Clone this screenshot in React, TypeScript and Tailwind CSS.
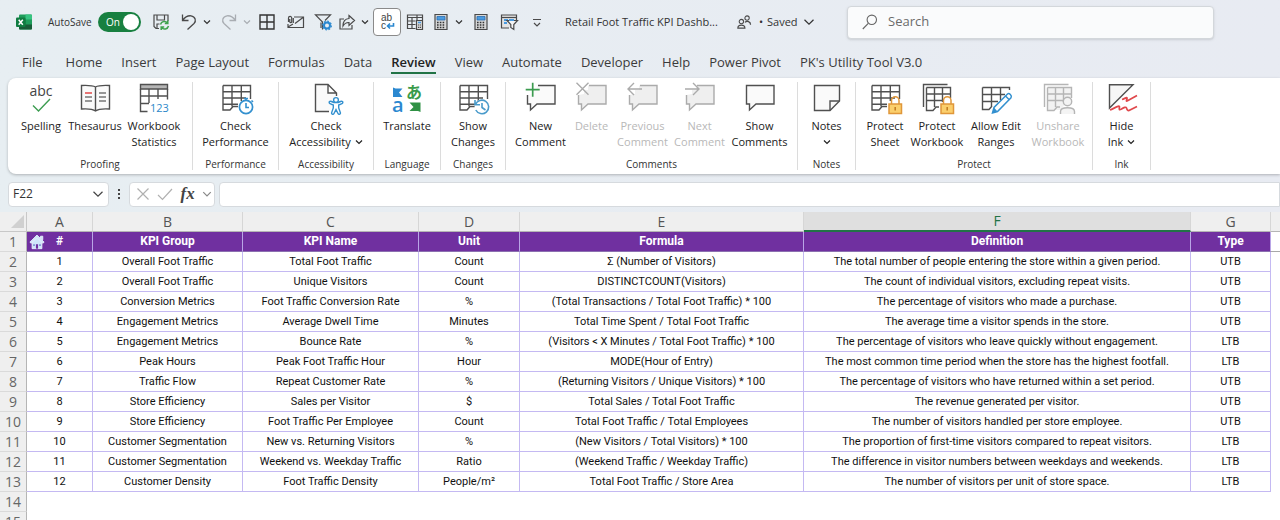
import type { ReactNode } from 'react';

const columns = [
  { letter: 'A', title: '#' },
  { letter: 'B', title: 'KPI Group' },
  { letter: 'C', title: 'KPI Name' },
  { letter: 'D', title: 'Unit' },
  { letter: 'E', title: 'Formula' },
  { letter: 'F', title: 'Definition' },
  { letter: 'G', title: 'Type' },
];

const kpis = [
  ['1', 'Overall Foot Traffic', 'Total Foot Traffic', 'Count', 'Σ (Number of Visitors)', 'The total number of people entering the store within a given period.', 'UTB'],
  ['2', 'Overall Foot Traffic', 'Unique Visitors', 'Count', 'DISTINCTCOUNT(Visitors)', 'The count of individual visitors, excluding repeat visits.', 'UTB'],
  ['3', 'Conversion Metrics', 'Foot Traffic Conversion Rate', '%', '(Total Transactions / Total Foot Traffic) * 100', 'The percentage of visitors who made a purchase.', 'UTB'],
  ['4', 'Engagement Metrics', 'Average Dwell Time', 'Minutes', 'Total Time Spent / Total Foot Traffic', 'The average time a visitor spends in the store.', 'UTB'],
  ['5', 'Engagement Metrics', 'Bounce Rate', '%', '(Visitors < X Minutes / Total Foot Traffic) * 100', 'The percentage of visitors who leave quickly without engagement.', 'LTB'],
  ['6', 'Peak Hours', 'Peak Foot Traffic Hour', 'Hour', 'MODE(Hour of Entry)', 'The most common time period when the store has the highest footfall.', 'LTB'],
  ['7', 'Traffic Flow', 'Repeat Customer Rate', '%', '(Returning Visitors / Unique Visitors) * 100', 'The percentage of visitors who have returned within a set period.', 'UTB'],
  ['8', 'Store Efficiency', 'Sales per Visitor', '$', 'Total Sales / Total Foot Traffic', 'The revenue generated per visitor.', 'UTB'],
  ['9', 'Store Efficiency', 'Foot Traffic Per Employee', 'Count', 'Total Foot Traffic / Total Employees', 'The number of visitors handled per store employee.', 'UTB'],
  ['10', 'Customer Segmentation', 'New vs. Returning Visitors', '%', '(New Visitors / Total Visitors) * 100', 'The proportion of first-time visitors compared to repeat visitors.', 'LTB'],
  ['11', 'Customer Segmentation', 'Weekend vs. Weekday Traffic', 'Ratio', '(Weekend Traffic / Weekday Traffic)', 'The difference in visitor numbers between weekdays and weekends.', 'LTB'],
  ['12', 'Customer Density', 'Foot Traffic Density', 'People/m²', 'Total Foot Traffic / Store Area', 'The number of visitors per unit of store space.', 'LTB'],
];

const tabs = ['Home', 'Insert', 'Page Layout', 'Formulas', 'Data', 'Review', 'View', 'Automate', 'Developer', 'Help', 'Power Pivot', "PK's Utility Tool V3.0"];

/* ---------- small shared icons ---------- */

const Chevron = ({ className = 'w-2 h-2' }: { className?: string }) => (
  <svg viewBox="0 0 8 8" className={className} fill="none" stroke="currentColor" strokeWidth="1.2">
    <path d="M1 2.5 4 5.5 7 2.5" vectorEffect="non-scaling-stroke" />
  </svg>
);

const Small = ({ children, className = 'w-4 h-4' }: { children: ReactNode; className?: string }) => (
  <svg viewBox="0 0 16 16" className={`overflow-visible ${className}`} fill="none" stroke="#4a4a4a" strokeWidth="1.2">
    {children}
  </svg>
);

const Big = ({ children }: { children: ReactNode }) => (
  <svg viewBox="0 0 32 32" className="w-8 h-8 overflow-visible" fill="none" stroke="#505050" strokeWidth="1.4">
    {children}
  </svg>
);

/* ---------- ribbon icons ---------- */

const sheetPath = 'M3 3.5H30.5V17M3 3.5V28H10L13 24.5H18M3 9.8H30.5M3 16H26M3 22.3H18M12 3.5V24.5M21.3 3.5V19';

const SpellingIcon = () => (
  <Big>
    <text x="16" y="14" textAnchor="middle" fontSize="14" fill="#444" stroke="none" fontFamily="Open Sans, sans-serif">abc</text>
    <path d="M8 23.5 13.5 29 25 17" stroke="#3c9c50" />
  </Big>
);

const ThesaurusIcon = () => (
  <Big>
    <path d="M16.5 5C13 3 7 3.3 2.5 3.5V27C7 26.7 13 26.5 16.5 29C20 26.5 26 26.7 30.5 27V3.5C26 3.3 20 3 16.5 5ZM16.5 5V29" fill="#fafafa" />
    <path d="M6 15H13M6 19H13M20 11H27M20 15H27M20 19H27" stroke="#777" />
    <path d="M6 11H13" stroke="#e03a3a" />
  </Big>
);

const StatisticsIcon = () => (
  <Big>
    <path d="M2.5 2.5H29.5V7H2.5Z" fill="#b5b5b5" />
    <path d="M2.5 7V29.5H9.5M29.5 7V17.5M2.5 14H29.5M2.5 21.5H11M11 7V21M20 7V17" />
    <text x="12" y="30" fontSize="11" fill="#2b88c9" stroke="none" fontFamily="Open Sans, sans-serif">123</text>
  </Big>
);

const PerformanceIcon = () => (
  <Big>
    <path d={sheetPath} />
    <circle cx="26" cy="25" r="6.6" fill="#fff" stroke="#3390cf" strokeWidth="1.7" />
    <path d="M26 21V25.5H29M24 16.5H28M26 16.5V18M31.5 18.5 33 20" stroke="#3390cf" strokeWidth="1.6" />
  </Big>
);

const AccessibilityIcon = () => (
  <Big>
    <path d="M19 29.5H5.5V2.5H18L26.5 11V14M18 2.5V11H26.5" fill="#fafafa" />
    <circle cx="26" cy="18" r="2.4" stroke="#3390cf" fill="#fff" />
    <path d="M19.5 19.5C18.8 20.5 19.3 21.3 20 21.6L23.3 23V26L21.5 31C21.5 32.5 23.4 32.8 24 31.5L26 27.5 28 31.5C28.6 32.8 30.5 32.5 30.5 31L28.7 26V23L32 21.6C32.7 21.3 33.2 20.5 32.5 19.5C31.8 19 31.2 19.2 30.5 19.5C27.5 21 24.5 21 21.5 19.5C20.8 19.2 20 19 19.5 19.5Z" stroke="#3390cf" fill="#fff" />
  </Big>
);

const TranslateIcon = () => (
  <Big>
    <path d="M2 5.5 4.5 6.5H11.5L8 10.5 11.5 15H2Z" fill="#2b88d0" stroke="none" />
    <text x="1" y="29.5" fontSize="20" fontWeight="600" fill="#2b88d0" stroke="none" fontFamily="Open Sans, sans-serif">a</text>
    <text x="15" y="15.5" fontSize="16" fontWeight="700" fill="#3a9b4b" stroke="none" fontFamily="Noto Sans CJK JP, sans-serif">あ</text>
    <path d="M18.5 20.5H29.5V30L27 29H18.5L22.5 25Z" fill="#2f9144" stroke="none" />
  </Big>
);

const ChangesIcon = () => (
  <Big>
    <path d={sheetPath} />
    <circle cx="25" cy="25" r="7.5" fill="#fff" stroke="none" />
    <path d="M18.5 22.5A6.8 6.8 0 1 1 18.8 28M18 18V22.8H23M25 21V25.5L28.5 28" stroke="#4a9bcb" strokeWidth="1.6" />
  </Big>
);

const BubbleIcon = ({ mark }: { mark?: 'plus' | 'x' | 'left' | 'right' }) => {
  const off = mark && mark !== 'plus';
  return (
    <Big>
      {mark ? (
        <path d="M12 3.5H30V22H12L5.5 28V22H2.5V13L8 12V8H12Z" fill={off ? '#efefef' : '#fafafa'} stroke="none" />
      ) : null}
      <path
        d={mark ? 'M13 3.5H30V22H12L5.5 28V22H2.5V13' : 'M2.5 3.5H30V22H12L5.5 28V22H2.5Z'}
        fill={mark ? 'none' : '#fafafa'}
        stroke={off ? '#ababab' : '#505050'}
      />
      {mark === 'plus' && <path d="M7.7 0.7V14.7M0.7 7.7H14.7" stroke="#3c9c50" strokeWidth="1.7" />}
      {mark === 'x' && <path d="M0.5 0.7 12.5 12.7M12.5 0.7 0.5 12.7" stroke="#ababab" />}
      {mark === 'left' && <path d="M15 7H1M7 1 1 7 7 13" stroke="#ababab" />}
      {mark === 'right' && <path d="M1 7H15M9 1 15 7 9 13" stroke="#ababab" />}
    </Big>
  );
};

const NotesIcon = () => (
  <Big>
    <path d="M3.5 3.5H28.5V19L19 28.5H3.5Z" fill="#fafafa" />
    <path d="M28.5 19H19V28.5" />
  </Big>
);

const Lock = () => (
  <g stroke="#e0973a" strokeWidth="1.5">
    <path d="M22.5 22V18.5A3.7 3.7 0 0 1 30 18.5V22" fill="none" />
    <path d="M20 22H32.5V31.5H20Z" fill="#fbcf6c" />
    <path d="M26.2 25V28.5" stroke="#c07a20" />
  </g>
);

const ProtectSheetIcon = () => (
  <Big>
    <path d={sheetPath} />
    <path d="M18 20H34V33H18Z" fill="#fff" stroke="none" />
    <Lock />
  </Big>
);

const bookPath = 'M2.5 25V2.5H26.5M5.5 5.5H29.5V16M5.5 5.5V28.5H12L15 25H18M5.5 12H29.5M5.5 18.5H22M13.5 5.5V25M21.5 5.5V20';

const ProtectBookIcon = () => (
  <Big>
    <path d={bookPath} />
    <Lock />
  </Big>
);

const RangesIcon = () => (
  <Big>
    <path d="M2.5 5.5H29.5V8M2.5 5.5V27.5H9L12 24M2.5 12.5H25M2.5 19.5H18M11.5 5.5V24M20.5 5.5V18" />
    <path d="M12.5 31 14 25.5 27.5 12C29 10.7 32.5 13.5 31 15.8L17.5 29.5Z" fill="#fff" stroke="#3390cf" strokeWidth="1.5" />
    <path d="M25.5 14 29 17.5" stroke="#3390cf" />
    <path d="M12.5 31 14 25.5 17.5 29.5Z" fill="#3390cf" stroke="none" />
  </Big>
);

const UnshareIcon = () => (
  <Big>
    <g stroke="#b5b5b5">
      <path d="M5.5 5.5H29.5V16L18 28H5.5Z" fill="#f2f2f2" stroke="none" />
      <path d={bookPath} />
      <circle cx="25.5" cy="19.5" r="4.2" fill="#f4f4f4" />
      <path d="M18.5 32V29.5C18.5 24.5 32.5 24.5 32.5 29.5V32" fill="#f4f4f4" />
    </g>
  </Big>
);

const InkIcon = () => (
  <Big>
    <path d="M3.5 2.7H27L3.5 26Z" fill="#f6f6f6" />
    <path d="M16 17.5C19 16.5 21.5 14.5 21 16.5S19.5 20 22 18.5L31 13.5M4 28C8 26.5 14 22.5 13.5 25S13 28.5 15.5 27 20 24.5 20.5 26 21.5 29.5 24 28L31 24.5" stroke="#e0484c" strokeWidth="1.7" />
  </Big>
);

/* ---------- quick access icons ---------- */

const ExcelLogo = () => (
  <svg viewBox="0 0 16 16" className="w-4 h-4 shrink-0">
    <rect x="3" y="0.5" width="13" height="15" rx="1" fill="#1f9d5b" />
    <path d="M9.5 0.5H15A1 1 0 0 1 16 1.5V5.5H9.5Z" fill="#37c481" />
    <path d="M3 5.5H9.5V10.5H3Z" fill="#14713f" />
    <path d="M3 10.5H16V14.5A1 1 0 0 1 15 15.5H4A1 1 0 0 1 3 14.5Z" fill="#185c37" />
    <rect x="0" y="3.5" width="9.5" height="9.5" rx="1" fill="#107c41" />
    <path d="M2.7 5.7 6.8 10.8M6.8 5.7 2.7 10.8" stroke="#fff" strokeWidth="1.5" />
  </svg>
);

const Calculator = () => (
  <Small>
    <path d="M2 0.5H14V15.5H2Z" fill="#d8d8d8" />
    <path d="M4 2.5H12V6H4Z" fill="#4a9be0" stroke="#2a6db0" strokeWidth="0.8" />
    <path d="M4 8.5H12M4 11H12M4 13.5H12" strokeDasharray="1.6 1.2" strokeWidth="1.5" stroke="#333" />
  </Small>
);

const QuickButton = ({ label, className, children }: { label: string; className: string; children: ReactNode }) => (
  <button type="button" aria-label={label} className={`shrink-0 flex items-center justify-center ${className}`}>
    {children}
  </button>
);

const TitleBar = () => (
  <div className="flex items-center h-11 pl-4 text-[#333]">
    <ExcelLogo />
    <label htmlFor="autosave" className="ml-4 w-[50px] shrink-0 text-[10px] whitespace-nowrap">AutoSave</label>
    <div className="relative w-[43px] h-5 shrink-0">
      <input id="autosave" type="checkbox" defaultChecked className="appearance-none block w-full h-full rounded-full bg-[#188040]" />
      <span className="absolute left-2 top-0.5 text-[10px] leading-4 text-white pointer-events-none">On</span>
      <span className="absolute right-0.5 top-0.5 w-4 h-4 rounded-full bg-white pointer-events-none" />
    </div>
    <QuickButton label="Save" className="ml-3 w-4 h-4">
      <Small>
        <path d="M6 14.5H3L1 12.5V1H15V7M4 1V6H11.5V1M4 14V10H6.5" />
        <path d="M7.5 10.5A4 4 0 0 1 14.5 9M14.8 6.5V9.5H11.8M15.5 12A4 4 0 0 1 8.5 13.5M8.2 16V13H11.2" stroke="#3fa34d" strokeWidth="1.5" />
      </Small>
    </QuickButton>
    <QuickButton label="Undo" className="ml-3 w-4 h-4">
      <Small>
        <path d="M1.5 0.5V6.5H7.5M1.5 6.5C4 3 7 1.5 10 1.8C14.5 2.5 15.5 7 13 9.5L6.5 15.5" strokeWidth="1.3" />
      </Small>
    </QuickButton>
    <QuickButton label="Undo history" className="ml-1.5 w-2 h-4"><Chevron /></QuickButton>
    <QuickButton label="Redo" className="ml-2.5 w-4 h-4">
      <Small>
        <path d="M14.5 0.5V6.5H8.5M14.5 6.5C12 3 9 1.5 6 1.8C1.5 2.5 0.5 7 3 9.5L9.5 15.5" stroke="#a9adb2" strokeWidth="1.3" />
      </Small>
    </QuickButton>
    <QuickButton label="Redo history" className="ml-1.5 w-2 h-4 text-[#a9adb2]"><Chevron /></QuickButton>
    <QuickButton label="Borders" className="ml-2 w-4 h-4">
      <Small><path d="M1 1H15V15H1ZM8 1V15M1 8H15" stroke="#333" strokeWidth="1.4" /></Small>
    </QuickButton>
    <QuickButton label="Email" className="ml-3 w-4 h-4">
      <Small>
        <path d="M7 3H16.5V13.5H1V10M8 9.5 16 3.5M1 13 6 10" />
        <path d="M1.5 8V4A1.6 1.6 0 0 1 4.7 4V8A1 1 0 0 1 2.8 8V5M6.3 4V9" />
      </Small>
    </QuickButton>
    <QuickButton label="Filter" className="ml-3 w-4 h-4">
      <Small>
        <path d="M7.5 15.5V8L0.5 0.8H15.5L10 6.5" />
        <path d="M6 8.5V14" />
        <circle cx="12" cy="11.5" r="3" stroke="#2b88d0" strokeWidth="2" />
        <circle cx="12" cy="11.5" r="4.4" stroke="#2b88d0" strokeWidth="1.2" strokeDasharray="1.8 1.6" />
      </Small>
    </QuickButton>
    <QuickButton label="Share" className="ml-2 w-4 h-4">
      <Small>
        <path d="M5 5H1V15H13V11M10 1.5 15.5 6.5 10 11.5V8.5C7 8.3 5.5 9.5 4 12C4 8 6 4.8 10 4.5Z" />
      </Small>
    </QuickButton>
    <QuickButton label="Share options" className="ml-1.5 w-2 h-4"><Chevron /></QuickButton>
    <QuickButton label="Wrap text" className="ml-1 w-7 h-7 rounded border border-[#8a8a8a] bg-white">
      <Small>
        <text x="2" y="6.5" fontSize="10" fill="#444" stroke="none" fontFamily="Liberation Sans, sans-serif">ab</text>
        <text x="2" y="15" fontSize="10" fill="#444" stroke="none" fontFamily="Liberation Sans, sans-serif">c</text>
        <path d="M14.5 9V12H8.5M11 9.5 8.5 12 11 14.5" stroke="#2b88d0" strokeWidth="1.6" />
      </Small>
    </QuickButton>
    <QuickButton label="Calculate sheet" className="ml-1.5 w-4 h-4">
      <Small>
        <path d="M8.5 14.5H0.5V1H15.5V6M0.5 3.5H15.5M0.5 7H8.5M0.5 10.5H8.5M5 3.5V14.5M10 1V6" />
        <path d="M9.5 6.5H15.5V15.5H9.5Z" fill="#ddd" />
        <path d="M11 8.5H14" stroke="#4a9be0" strokeWidth="1.6" />
        <path d="M11 11H14M11 13.3H14" strokeDasharray="1.2 0.6" />
      </Small>
    </QuickButton>
    <QuickButton label="Calculate now" className="ml-2.5 w-4 h-4"><Calculator /></QuickButton>
    <QuickButton label="Calculate options" className="ml-1.5 w-2 h-4"><Chevron /></QuickButton>
    <QuickButton label="Calculator" className="ml-2.5 w-4 h-4"><Calculator /></QuickButton>
    <QuickButton label="Filter table" className="ml-3 w-4 h-4">
      <Small>
        <path d="M15.5 6V1H0.5V14H8" fill="#e4e4e4" />
        <path d="M0.5 3.5H15.5" />
        <path d="M3 6H7M3 9H6" stroke="#4a9be0" strokeWidth="2" />
        <path d="M6 6.5H16.5L12.8 10.5V15.5L9.8 13.5V10.5Z" fill="#f4f4f4" />
        <path d="M8 6H13" stroke="#4a9be0" strokeWidth="2" />
      </Small>
    </QuickButton>
    <QuickButton label="Customize toolbar" className="ml-3 w-4 h-4">
      <Small><path d="M4 5.5H12M5 9 8 12 11 9" /></Small>
    </QuickButton>
    <h1 className="ml-5 w-[160px] shrink-0 text-[11px] whitespace-nowrap">Retail Foot Traffic KPI Dashb...</h1>
    <QuickButton label="Shared with" className="ml-3 w-3.5 h-4">
      <Small className="w-3.5 h-3.5">
        <circle cx="11.5" cy="3.5" r="2.5" />
        <circle cx="5" cy="7.5" r="2.5" />
        <path d="M1 15C1 10.5 9 10.5 9 15ZM9 8.5C11.5 6 15.5 7.5 15.5 11" strokeWidth="1.4" />
      </Small>
    </QuickButton>
    <span className="ml-2 w-2 text-[11px]">•</span>
    <button type="button" className="flex items-center justify-between w-12 shrink-0 text-[11px]">
      Saved
      <Chevron className="w-3 h-3 shrink-0" />
    </button>
    <div className="ml-8 mr-[66px] flex-1 flex items-center h-[33px] pl-3.5 rounded bg-[#fafbfc] border border-[#d3d7db] shadow-sm">
      <svg viewBox="0 0 16 16" className="w-4 h-4 shrink-0" fill="none" stroke="#666" strokeWidth="1.1">
        <circle cx="9.8" cy="5.8" r="4.7" />
        <path d="M6.3 9.3 0.8 15" />
      </svg>
      <input aria-label="Search" placeholder="Search" className="ml-2.5 w-full text-[13px] outline-none placeholder:text-[#6b6b6b]" />
    </div>
  </div>
);

const TabBar = () => (
  <nav className="flex items-start gap-[19px] h-[34px] pl-[22px] pt-2 text-[13px] leading-5 text-[#3b3b3b] whitespace-nowrap">
    <a href="#" className="mr-1">File</a>
    {tabs.map((tab) => (
      <a key={tab} href="#" className={tab === 'Review' ? 'font-semibold text-[#222] border-b-2 border-[#217346]' : ''}>
        {tab}
      </a>
    ))}
  </nav>
);

type ToolProps = { lines: string[]; icon: ReactNode; className: string; disabled?: boolean; menu?: boolean };

const Tool = ({ lines, icon, className, disabled, menu }: ToolProps) => (
  <button
    type="button"
    disabled={disabled}
    className={`flex flex-col items-center shrink-0 text-[11px] leading-4 whitespace-nowrap ${disabled ? 'text-[#b8b8b8]' : 'text-[#222]'} ${className}`}
  >
    {icon}
    <span className="mt-1">{lines[0]}</span>
    <span className="flex items-center gap-1 h-4">
      {lines[1]}
      {menu && <Chevron className="w-2 h-2" />}
    </span>
  </button>
);

const Group = ({ name, className, children }: { name: string; className: string; children: ReactNode }) => (
  <section className={`shrink-0 flex flex-col items-center border-r border-[#dcdcdc] ${className}`}>
    <div className="flex flex-1 justify-center">{children}</div>
    <div className="text-[10px] leading-3 text-[#333]">{name}</div>
  </section>
);

const Ribbon = () => (
  <div className="ml-2 h-24 py-1 flex bg-white rounded-l-lg shadow-[0_1px_3px_rgba(0,0,0,0.25)]">
    <Group name="Proofing" className="w-[185px]">
      <Tool className="w-[50px]" icon={<SpellingIcon />} lines={['Spelling']} />
      <Tool className="w-[58px]" icon={<ThesaurusIcon />} lines={['Thesaurus']} />
      <Tool className="w-[60px]" icon={<StatisticsIcon />} lines={['Workbook', 'Statistics']} />
    </Group>
    <Group name="Performance" className="w-[86px]">
      <Tool className="w-[60px]" icon={<PerformanceIcon />} lines={['Check', 'Performance']} />
    </Group>
    <Group name="Accessibility" className="w-[95px]">
      <Tool className="w-[60px]" icon={<AccessibilityIcon />} lines={['Check', 'Accessibility']} menu />
    </Group>
    <Group name="Language" className="w-[67px]">
      <Tool className="w-[60px]" icon={<TranslateIcon />} lines={['Translate']} />
    </Group>
    <Group name="Changes" className="w-[65px]">
      <Tool className="w-[60px]" icon={<ChangesIcon />} lines={['Show', 'Changes']} />
    </Group>
    <Group name="Comments" className="w-[292px]">
      <Tool className="w-[54px]" icon={<BubbleIcon mark="plus" />} lines={['New', 'Comment']} />
      <Tool className="w-[48px]" icon={<BubbleIcon mark="x" />} lines={['Delete']} disabled />
      <Tool className="w-[54px]" icon={<BubbleIcon mark="left" />} lines={['Previous', 'Comment']} disabled />
      <Tool className="w-[60px]" icon={<BubbleIcon mark="right" />} lines={['Next', 'Comment']} disabled />
      <Tool className="w-[60px]" icon={<BubbleIcon />} lines={['Show', 'Comments']} />
    </Group>
    <Group name="Notes" className="w-[58px]">
      <Tool className="w-[50px]" icon={<NotesIcon />} lines={['Notes']} menu />
    </Group>
    <Group name="Protect" className="w-[237px]">
      <Tool className="w-[50px]" icon={<ProtectSheetIcon />} lines={['Protect', 'Sheet']} />
      <Tool className="w-[54px]" icon={<ProtectBookIcon />} lines={['Protect', 'Workbook']} />
      <Tool className="w-[64px]" icon={<RangesIcon />} lines={['Allow Edit', 'Ranges']} />
      <Tool className="w-[60px]" icon={<UnshareIcon />} lines={['Unshare', 'Workbook']} disabled />
    </Group>
    <Group name="Ink" className="w-[58px]">
      <Tool className="w-[50px]" icon={<InkIcon />} lines={['Hide', 'Ink']} menu />
    </Group>
  </div>
);

const FormulaBar = () => (
  <div className="flex items-center h-[38px] pt-0.5 pl-2">
    <div className="flex items-center w-[101px] h-[25px] pl-1 pr-1 rounded bg-white border border-[#d6dade]">
      <input aria-label="Name box" defaultValue="F22" className="w-full min-w-0 text-[12px] text-[#333] outline-none" />
      <Chevron className="w-3 h-3 shrink-0 text-[#444]" />
    </div>
    <div className="w-5 flex flex-col items-center gap-0.5">
      <span className="w-0.5 h-0.5 bg-[#444]" />
      <span className="w-0.5 h-0.5 bg-[#444]" />
      <span className="w-0.5 h-0.5 bg-[#444]" />
    </div>
    <div className="flex items-center justify-between w-[86px] h-[25px] pl-1.5 pr-0.5 rounded bg-white border border-[#d6dade]">
      <button type="button" aria-label="Cancel">
        <svg viewBox="0 0 14 14" className="w-3.5 h-3.5" fill="none" stroke="#b0b0b0" strokeWidth="1.2"><path d="M1.5 1.5 12.5 12.5M12.5 1.5 1.5 12.5" /></svg>
      </button>
      <button type="button" aria-label="Enter">
        <svg viewBox="0 0 16 14" className="w-4 h-3.5" fill="none" stroke="#b0b0b0" strokeWidth="1.2"><path d="M1 8 5.5 12.5 15 2" /></svg>
      </button>
      <button type="button" aria-label="Insert function" className="font-['Liberation_Serif',serif] italic font-bold text-[17px] leading-5 text-[#444]">fx</button>
      <button type="button" aria-label="Function list" className="text-[#888]"><Chevron className="w-2.5 h-2.5" /></button>
    </div>
    <input aria-label="Formula bar" className="ml-1 flex-1 h-[25px] rounded-l bg-white border border-[#d6dade]" />
  </div>
);

const HomeIcon = () => (
  <svg viewBox="0 0 18 18" className="absolute left-0.5 top-0.5 w-4 h-4" fill="#cfe6fa" stroke="#e8f3fd" strokeWidth="1">
    <path d="M13 2.5H15.5V6.5L13 4.5Z" />
    <path d="M3.5 9 9 4 14.5 9V16.5H3.5Z" />
    <path d="M9 1.2 17 9.2 15.6 10.4 9 4 2.4 10.4 1 9.2Z" />
    <path d="M7.8 11.5H10.2V16.5H7.8Z" fill="#7030a0" stroke="none" />
    <path d="M4.8 11.5H6.5V13.5H4.8ZM11.5 11.5H13.2V13.5H11.5Z" fill="#6d7fc9" stroke="none" />
  </svg>
);

const rowHead = "p-0 border-r border-r-[#b5b5b5] border-b border-b-[#dadada] bg-[#efefef] font-['Open_Sans',sans-serif] font-normal text-[14px] text-[#666]";

const Sheet = () => (
  <table className="w-full table-fixed border-separate border-spacing-0 text-center font-['Roboto',sans-serif] text-[11px] leading-[19px] text-[#111] whitespace-nowrap bg-white">
    <colgroup>
      <col className="w-[27px]" />
      <col className="w-[66px]" />
      <col className="w-[150px]" />
      <col className="w-[176px]" />
      <col className="w-[101px]" />
      <col className="w-[284px]" />
      <col className="w-[387px]" />
      <col className="w-[80px]" />
      <col />
    </colgroup>
    <thead className="font-['Open_Sans',sans-serif]">
      <tr className="h-5 bg-[#efefef]">
        <th className="p-0 border-r border-b border-[#c8c8c8]">
          <svg viewBox="0 0 14 14" className="ml-auto mr-0.5 w-3.5 h-3.5" fill="#d0d0d0"><path d="M14 0V13H1Z" /></svg>
        </th>
        {columns.map(({ letter }) => (
          <th
            key={letter}
            className={`p-0 border-r border-r-[#d6d6d6] font-normal text-[14px] ${letter === 'F' ? 'bg-[#dfdfdf] text-[#217346] leading-[18px] border-b-2 border-b-[#217346]' : 'text-[#555] border-b border-b-[#b5b5b5]'}`}
          >
            {letter}
          </th>
        ))}
        <th className="p-0 border-b border-[#b5b5b5]" />
      </tr>
    </thead>
    <tbody>
      <tr className="h-5">
        <th className={rowHead}>1</th>
        {columns.map(({ letter, title }) => (
          <th key={letter} className="relative p-0 bg-[#7030a0] text-[12px] text-white font-bold border-r border-r-[#b9a5e6] border-b border-b-[#8b70b0]">
            {letter === 'A' && <HomeIcon />}
            {title}
          </th>
        ))}
        <td className="p-0 border-b border-[#a8a8a8]" />
      </tr>
      {kpis.map((row, i) => (
        <tr key={row[0]} className="h-5">
          <th className={rowHead}>{i + 2}</th>
          {row.map((cell, j) => (
            <td key={j} className="p-0 border-r border-b border-[#c4b9f2]">{cell}</td>
          ))}
          <td />
        </tr>
      ))}
      {[14, 15].map((n) => (
        <tr key={n} className="h-5">
          <th className={rowHead}>{n}</th>
          <td colSpan={8} />
        </tr>
      ))}
    </tbody>
  </table>
);

export default function App() {
  return (
    <div className="h-screen overflow-hidden bg-linear-to-r from-[#e7eef2] to-[#e8ebf2] font-['Open_Sans',sans-serif]">
      <TitleBar />
      <TabBar />
      <Ribbon />
      <FormulaBar />
      <Sheet />
    </div>
  );
}
